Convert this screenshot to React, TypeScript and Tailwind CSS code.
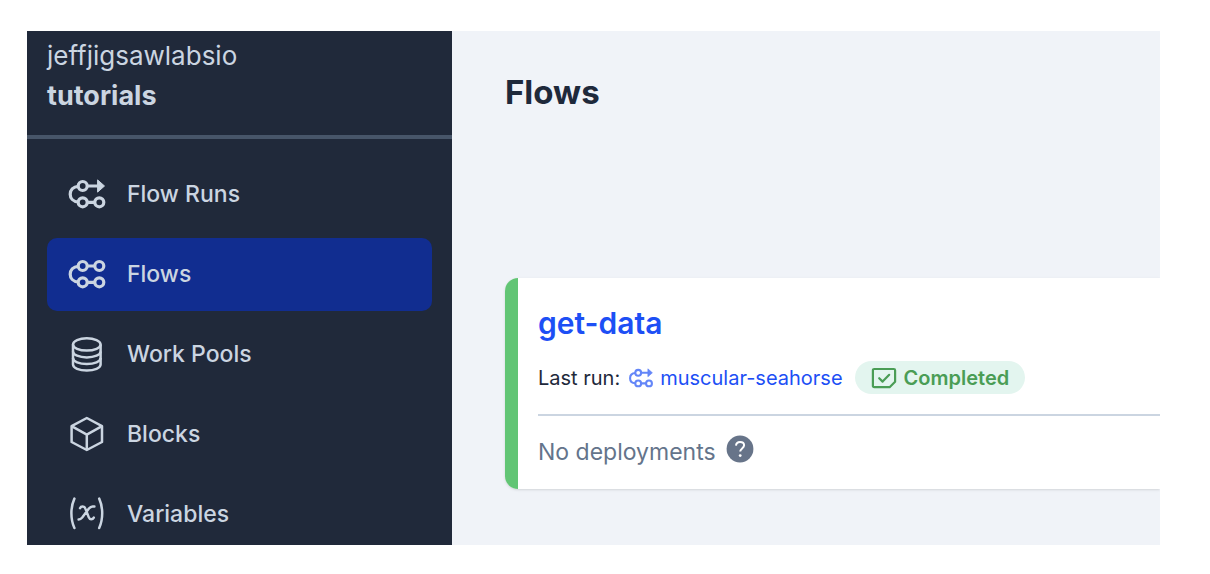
import type { ReactNode } from "react";

type IconProps = { className?: string };

function FlowRunsIcon({ className = "size-10" }: IconProps) {
  return (
    <svg viewBox="0 0 40 40" className={className} fill="none" stroke="currentColor" strokeWidth="3.2" aria-hidden="true">
      <path d="M11.4 12.3C6 12.6 3.2 16.2 3.2 20.2S6 27.7 11.4 28" />
      <circle cx="15.7" cy="12" r="4.5" />
      <circle cx="15.7" cy="28.3" r="4.5" />
      <circle cx="32.3" cy="28.3" r="4.5" />
      <path d="M20.2 12H31M20.2 28.3h7.6" />
      <path d="M30.6 5.9 37.5 12l-6.9 6.1z" fill="currentColor" strokeWidth="1" strokeLinejoin="round" />
    </svg>
  );
}

function FlowsIcon({ className = "size-10" }: IconProps) {
  return (
    <svg viewBox="0 0 40 40" className={className} fill="none" stroke="currentColor" strokeWidth="3.2" aria-hidden="true">
      <path d="M11.4 12.3C6 12.6 3.2 16.2 3.2 20.2S6 27.7 11.4 28" />
      <circle cx="15.7" cy="12" r="4.5" />
      <circle cx="32.3" cy="12" r="4.5" />
      <circle cx="15.7" cy="28.3" r="4.5" />
      <circle cx="32.3" cy="28.3" r="4.5" />
      <path d="M20.2 12h7.6M20.2 28.3h7.6" />
    </svg>
  );
}

function WorkPoolsIcon({ className = "size-10" }: IconProps) {
  return (
    <svg viewBox="0 0 40 40" className={className} fill="none" stroke="currentColor" strokeWidth="2.5" aria-hidden="true">
      <ellipse cx="19.8" cy="10.4" rx="13.8" ry="6.2" />
      <path d="M6 10.4v20.2c0 3.4 6.2 6 13.8 6s13.8-2.6 13.8-6V10.4" />
      <path d="M6 17.4c0 3.4 6.2 6 13.8 6s13.8-2.6 13.8-6M6 24c0 3.4 6.2 6 13.8 6s13.8-2.6 13.8-6" />
    </svg>
  );
}

function BlocksIcon({ className = "size-10" }: IconProps) {
  return (
    <svg viewBox="0 0 40 40" className={className} fill="none" stroke="currentColor" strokeWidth="2.5" strokeLinejoin="round" aria-hidden="true">
      <path d="M19.8 4 35 12.2v15.8L19.8 36 4.6 28V12.2z" />
      <path d="M4.6 12.2 19.8 20.6 35 12.2M19.8 20.6V36" />
    </svg>
  );
}

function VariablesIcon({ className = "size-10" }: IconProps) {
  return (
    <svg viewBox="0 0 40 40" className={className} fill="none" stroke="currentColor" strokeWidth="2.5" strokeLinecap="round" strokeLinejoin="round" aria-hidden="true">
      <path d="M7.4 4.6C3.4 13.2 3.4 25.4 7.4 34M32.2 4.6c4 8.6 4 20.8 0 29.4" />
      <path d="M13 14.2c1-2.2 4.400-2.400 5.400.4l3.400 8.800c1 2.600 3.800 2.400 5 .2M27.400 12.400h-1.800c-1.600 0-2.600.8-3.700 2.200L15.200 23.600c-1.100 1.400-2 2-3.600 2" />
    </svg>
  );
}

function CompletedIcon() {
  return (
    <svg viewBox="0 0 26 22" className="h-[22px] w-[26px]" fill="none" stroke="currentColor" strokeWidth="2.2" strokeLinejoin="round" strokeLinecap="round" aria-hidden="true">
      <path d="M3.2 2H22.8a1.3 1.3 0 0 1 1.3 1.3V14.8L18.6 20.2H3.2a1.3 1.3 0 0 1-1.3-1.3V3.3A1.3 1.3 0 0 1 3.2 2z" />
      <path d="M8.2 11.2 11.6 14.6 18.2 7.8" />
    </svg>
  );
}

function NavItem({ icon, label, active = false }: { icon: ReactNode; label: string; active?: boolean }) {
  return (
    <a
      href="#"
      aria-current={active ? "page" : undefined}
      className={
        active
          ? "flex items-center gap-5 rounded-[10px] bg-[#112d90] px-5 pt-4 pb-[17px]"
          : "flex items-center gap-5 rounded-[10px] px-5 pt-4 pb-[17px]"
      }
    >
      {icon}
      <span className="text-[23px] leading-10 font-medium">{label}</span>
    </a>
  );
}

export default function App() {
  return (
    <div className="h-screen bg-white pt-[31px] pr-[50px] pb-[29px] pl-[27px] font-['Inter',sans-serif]">
      <div className="flex h-full overflow-hidden bg-[#f0f3f8]">
        <aside className="w-[425px] shrink-0 bg-[#20293a] text-[#cbd5e1]">
          <div className="border-b-4 border-[#475569] px-5 pt-[5px] pb-[19px] leading-10">
            <div className="text-[26px]">jeffjigsawlabsio</div>
            <div className="text-[27px] font-bold">tutorials</div>
          </div>
          <nav className="flex flex-col gap-[7px] px-5 pt-[19px]">
            <NavItem icon={<FlowRunsIcon />} label="Flow Runs" />
            <NavItem icon={<FlowsIcon />} label="Flows" active />
            <NavItem icon={<WorkPoolsIcon />} label="Work Pools" />
            <NavItem icon={<BlocksIcon />} label="Blocks" />
            <NavItem icon={<VariablesIcon />} label="Variables" />
          </nav>
        </aside>

        <main className="min-w-0 flex-1 pt-[41px] pl-[53px]">
          <h1 className="text-[33px] leading-10 font-bold text-[#1e293b]">Flows</h1>

          <article className="mt-[166px] flex rounded-l-[13px] bg-white shadow">
            <div className="w-[13px] shrink-0 rounded-l-[13px] bg-[#62c575]" />
            <div className="min-w-0 flex-1 pt-[25px] pb-[17px] pl-5">
              <h2 className="text-[30px] leading-10 font-semibold">
                <a href="#" className="text-[#1d4ff5]">get-data</a>
              </h2>
              <div className="mt-[18px] flex h-[33px] items-center text-[20px]">
                <span className="text-[#1e293b]">Last run:</span>
                <a href="#" className="ml-2 flex items-center gap-1.5 text-[#1d4ff5]">
                  <FlowRunsIcon className="size-[26px] text-[#6486f8]" />
                  muscular-seahorse
                </a>
                <span className="ml-3 flex h-[33px] items-center gap-[7px] rounded-full bg-[#e3f5ef] px-4 font-semibold text-[#4a9d55]">
                  <CompletedIcon />
                  Completed
                </span>
              </div>
              <hr className="mt-5 border-t-2 border-[#cbd5e1]" />
              <div className="mt-4 flex h-10 items-center gap-2.5 text-[23px] text-[#64748b]">
                No deployments
                <button type="button" aria-label="About deployments" className="mb-1.5 rounded-full">
                  <svg viewBox="0 0 28 28" className="size-7" aria-hidden="true">
                    <circle cx="14" cy="14" r="13.4" fill="#677489" />
                    <path d="M10 10.6c.2-2.4 1.8-3.7 4-3.7 2.4 0 4.1 1.3 4.1 3.4 0 3-3.9 3.2-3.9 6.2" fill="none" stroke="white" strokeWidth="2" />
                    <circle cx="14.2" cy="20.6" r="1.4" fill="white" />
                  </svg>
                </button>
              </div>
            </div>
          </article>
        </main>
      </div>
    </div>
  );
}
